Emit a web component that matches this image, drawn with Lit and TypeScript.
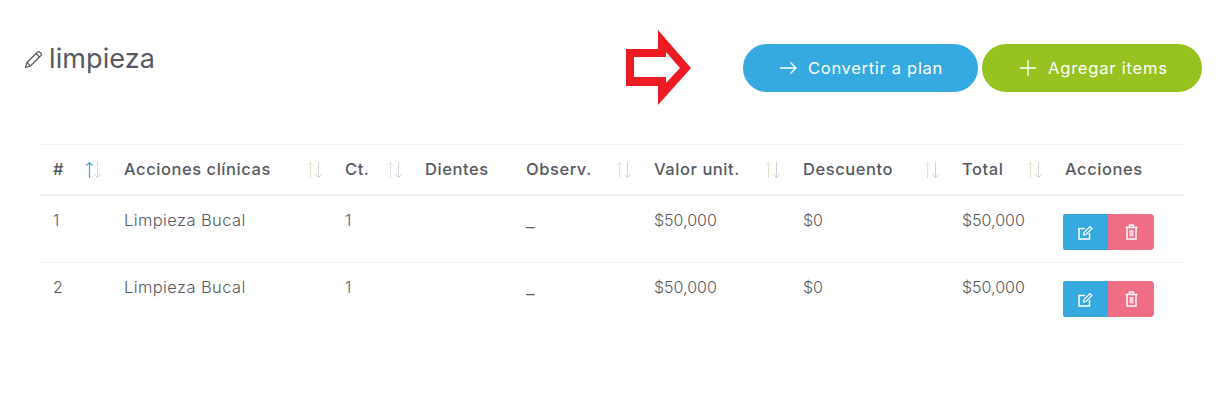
import { LitElement, html, css } from "lit";
import { customElement } from "lit/decorators.js";

const sortIcon = (tone: string) => html`<svg class="sort ${tone}" width="17" height="18" viewBox="0 0 17 18" fill="none">
  <path class="up" d="M4.500 17V1.500M1.500 4.500L4.500 1.500L7.500 4.500"/>
  <path class="down" d="M12.500 1V16.500M9.500 13.500L12.500 16.500L15.500 13.500"/>
</svg>`;

const headers: [string, string][] = [
  ["#", "active"],
  ["Acciones clínicas", "tan"],
  ["Ct.", "lilac"],
  ["Dientes", ""],
  ["Observ.", "lilac"],
  ["Valor unit.", "tan"],
  ["Descuento", "lilac"],
  ["Total", "tan"],
  ["Acciones", ""],
];

const rows = [
  ["1", "Limpieza Bucal", "1", "", "_", "$50,000", "$0", "$50,000"],
  ["2", "Limpieza Bucal", "1", "", "_", "$50,000", "$0", "$50,000"],
];

@customElement("app-root")
export class AppRoot extends LitElement {
  static styles = css`
    :host {
      display: block;
      width: 1228px;
      height: 411px;
      background: #fff;
      color: #575962;
      font-family: "Inter", "Open Sans", sans-serif;
      overflow: hidden;
    }
    .top {
      display: flex;
      align-items: flex-start;
      padding: 30px 26px 0 24px;
      height: 114px;
      box-sizing: border-box;
    }
    .title {
      display: flex;
      align-items: center;
      gap: 6px;
      margin: 0;
      height: 57px;
      font-size: 27px;
      font-weight: 400;
      letter-spacing: 0.1px;
      color: #575962;
    }
    .title svg { margin-top: 2px; }
    .redarrow {
      margin-left: 471px;
      flex: none;
    }
    .btns {
      display: flex;
      gap: 4px;
      margin-left: 51px;
      margin-top: 14px;
    }
    .btn {
      height: 48px;
      border-radius: 24px;
      display: flex;
      align-items: center;
      box-sizing: border-box;
      color: #fff;
      font-size: 16.5px;
      font-weight: 400;
      letter-spacing: 0.7px;
      white-space: nowrap;
    }
    .blue { width: 235px; background: #36a9e1; padding-left: 36px; gap: 11px; }
    .green { width: 220px; background: #98c21f; padding-left: 37px; gap: 11px; letter-spacing: 0.8px; }
    .table {
      margin: 30px 44px 0 40px;
      display: grid;
      grid-template-columns: 71px 221px 80px 101px 128px 149px 159px 103px 132px;
      border-top: 1px solid #f1f1f5;
    }
    .th {
      height: 49px;
      border-bottom: 2px solid #f1f1f5;
      display: flex;
      align-items: center;
      justify-content: space-between;
      padding: 0 9px 0 13px;
      font-size: 16.5px;
      font-weight: 500;
      letter-spacing: 0.55px;
      white-space: nowrap;
    }
    .th span { margin-bottom: 2px; }
    .td {
      height: 66px;
      padding: 14px 13px 0;
      box-sizing: border-box;
      font-size: 16px;
      font-weight: 300;
      line-height: 20px;
    }
    .wide { font-size: 16.5px; letter-spacing: 0.4px; }
    .line { border-bottom: 1px solid #f1f1f5; height: 67px; }
    .dash { padding-top: 15px; font-size: 19px; }
    .acts { display: flex; padding: 18px 0 0 11px; }
    .act {
      height: 36px;
      display: flex;
      align-items: center;
      justify-content: center;
    }
    .edit { width: 45px; background: #36a9e1; border-radius: 2px 0 0 2px; }
    .del { width: 46px; background: #ef6e85; border-radius: 0 4px 4px 0; }
    .sort path { stroke-width: 1; }
    .sort.tan .up { stroke: #e6e1cd; }
    .sort.tan .down { stroke: #d2d5d6; }
    .sort.lilac .up { stroke: #d9e5ee; }
    .sort.lilac .down { stroke: #d6cfe4; }
    .sort.active .up { stroke: #4aa3df; stroke-width: 1.2; }
    .sort.active .down { stroke: #e0cfe6; }
  `;

  render() {
    return html`
      <div class="top">
        <h1 class="title">
          <svg width="19" height="19" viewBox="0 0 19 19" fill="none" stroke="#575962" stroke-width="1.200" stroke-linejoin="round">
            <path d="M1.500 17.500L3 12.500L13.500 2L15 1.500L17.500 4L17 5.500L6.500 16Z"/>
            <path d="M3 12.500L6.500 16M12 3.500L15.500 7"/>
          </svg>
          <span>limpieza</span>
        </h1>
        <svg class="redarrow" width="66" height="76" viewBox="0 0 66 76">
          <path fill="#ed1c24" fill-rule="evenodd" d="M0 19H32V0L65 38L32 75V56H0ZM8 27V47H40V53L54 38L40 22V27Z"/>
        </svg>
        <div class="btns">
          <div class="btn blue">
            <svg width="18" height="14" viewBox="0 0 18 14" fill="none" stroke="#fff" stroke-width="1.300"><path d="M1 7H17M11.500 1.500L17 7L11.500 12.500"/></svg>
            <span>Convertir a plan</span>
          </div>
          <div class="btn green">
            <svg width="18" height="18" viewBox="0 0 18 18" fill="none" stroke="#fff" stroke-width="1.300"><path d="M9 1V17M1 9H17"/></svg>
            <span>Agregar items</span>
          </div>
        </div>
      </div>
      <div class="table">
        ${headers.map(([t, s]) => html`<div class="th"><span>${t}</span>${s ? sortIcon(s) : ""}</div>`)}
        ${rows.map((r, ri) => html`
          ${r.map((c, ci) => html`<div class="td ${ri === 0 ? "line" : ""} ${c === "_" ? "dash" : ""} ${ci === 1 ? "wide" : ""}">${c}</div>`)}
          <div class="td acts ${ri === 0 ? "line" : ""}">
            <div class="act edit">
              <svg width="15" height="15" viewBox="0 0 15 15" fill="none" stroke="#fff" stroke-width="1.500">
                <path d="M11.500 8V14H1V3.500H7"/>
                <path d="M5.500 10L6 7.500L12 1.500L14 3.500L8 9.500Z" stroke-width="1.200"/>
              </svg>
            </div>
            <div class="act del">
              <svg width="13" height="16" viewBox="0 0 13 16" fill="none" stroke="#fff" stroke-width="1.400">
                <path d="M0.500 3.500H12.500M4.500 3V1H8.500V3"/>
                <path d="M2 3.500V15H11V3.500"/>
                <path d="M4.500 6V12.500H8.500V6Z" fill="#fff" fill-opacity="0.7" stroke="none"/>
              </svg>
            </div>
          </div>
        `)}
      </div>
    `;
  }
}
